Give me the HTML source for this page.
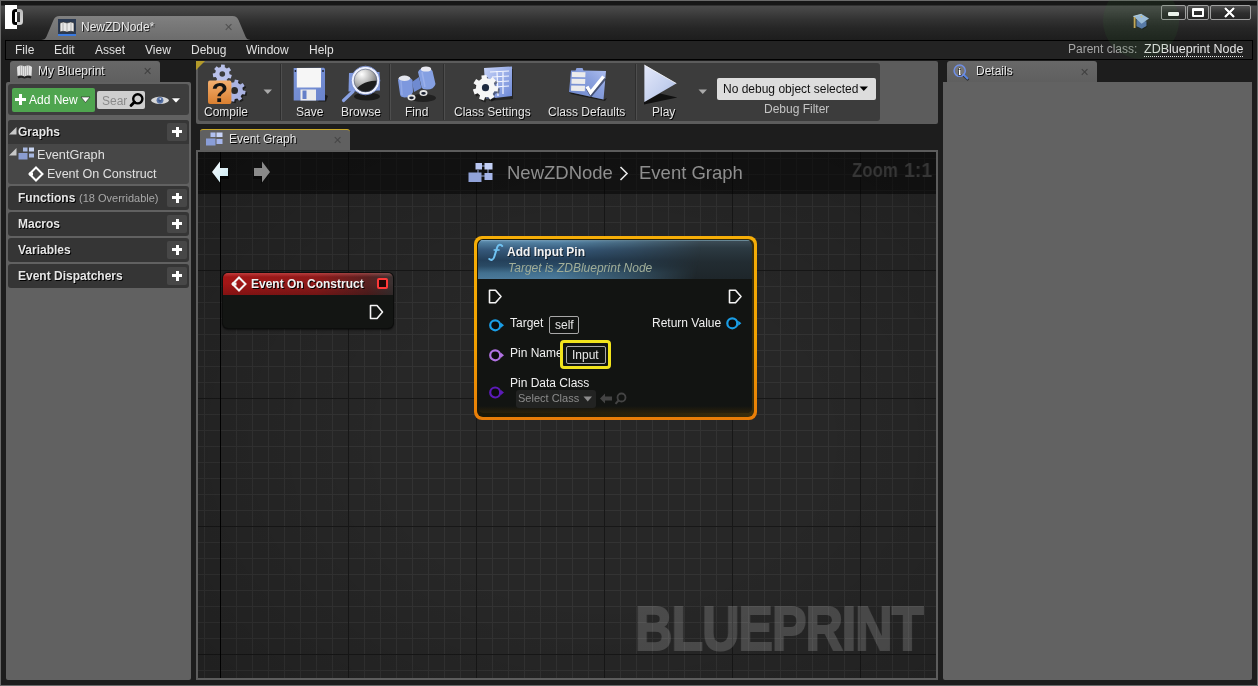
<!DOCTYPE html>
<html><head><meta charset="utf-8">
<style>
*{margin:0;padding:0;box-sizing:border-box}
html,body{width:1258px;height:686px;overflow:hidden;background:#1c1c1c}
body{font-family:"Liberation Sans",sans-serif;font-size:12px;color:#e6e6e6;position:relative}
.a{position:absolute}
.t{position:absolute;white-space:nowrap;line-height:1;will-change:transform}
.sh{text-shadow:1px 1px 0 #000}
#win{left:0;top:0;width:1258px;height:686px;border:1px solid #6a6a6a;background:#1d1d1d}
#title{left:1px;top:1px;width:1256px;height:39px;background:linear-gradient(#171717 0,#171717 4px,#4b4b4b 5px,#424242 10px,#333 18px,#262626 27px,#1d1d1d 39px)}
.wbtn{border:1px solid #a0a0a0;border-radius:2px;background:linear-gradient(#505050,#2e2e2e 55%,#262626)}
#menubar{left:5px;top:40px;width:1248px;height:20px;background:#232323;border:1px solid #000}
.menu{top:44px;color:#e0e0e0}
/* left panel */
#lp{left:6px;top:82px;width:185px;height:598px;background:#616161;border-radius:2px}
.tab{background:linear-gradient(#686868,#5f5f5f);border-radius:3px 3px 0 0}
.sec{left:8px;width:181px;background:#353535;border-radius:3px}
.plus{width:20px;height:18px;background:#474747;border-radius:2px}
.plus:before,.plus:after{content:"";position:absolute;background:#fff}
.plus:before{left:5px;top:7px;width:10px;height:3px}
.plus:after{left:8.5px;top:3.5px;width:3px;height:10px}
/* toolbar */
#tb{left:196px;top:61px;width:742px;height:63px;background:#5c5c5c;border-radius:2px}
#tbin{left:198px;top:63px;width:682px;height:58px;background:#3c3c3c;border-radius:3px}
.sep{top:64px;width:2px;height:56px;background:#2e2e2e;border-right:1px solid #4e4e4e}
.lbl{top:106px}
/* graph */
#gframe{left:196px;top:150px;width:742px;height:530px;background:#5c5c5c}
#graph{left:198px;top:152px;width:738px;height:526px;overflow:hidden;background-color:#272727;
background-image:
linear-gradient(90deg,#000 1px,transparent 1px),
linear-gradient(90deg,#171717 1px,transparent 1px),
linear-gradient(#171717 1px,transparent 1px),
linear-gradient(90deg,#333 1px,transparent 1px),
linear-gradient(#333 1px,transparent 1px);
background-repeat:repeat-y,repeat,repeat,repeat,repeat;
background-size:1px 100%,128px 128px,128px 128px,16px 16px,16px 16px;
background-position:22px 0,22px 118px,22px 118px,6px 6px,6px 6px}
#vig{left:0;top:0;width:738px;height:526px;background:radial-gradient(ellipse 72% 75% at 55% 55%,rgba(0,0,0,0) 40%,rgba(0,0,0,.2) 100%)}
#crumb{left:0;top:0;width:738px;height:42px;background:rgba(0,0,0,.5)}
/* details */
#dp{left:943px;top:82px;width:309px;height:598px;background:#626262;border-radius:0 0 2px 2px}
</style></head><body>
<div id="win" class="a"></div>
<div id="title" class="a"></div>

<!-- logo -->
<div class="a" style="left:5px;top:5px;width:12px;height:24px;background:#fff"></div>
<div class="a" style="left:12px;top:9px;width:10.5px;height:16px;border:3px solid #fff;border-radius:3.5px;mix-blend-mode:difference"></div>
<!-- doc tab -->
<svg class="a" style="left:40px;top:15px" width="212" height="25" viewBox="0 0 212 25"><defs><linearGradient id="dt" x1="0" y1="0" x2="0" y2="1"><stop offset="0" stop-color="#808080"/><stop offset="1" stop-color="#6c6c6c"/></linearGradient></defs>
<path d="M0 25 C4 25 5.5 24 6.5 21.5 L13.5 5 C14.7 2.2 16.5 1 19.5 1 L192.5 1 C195.5 1 197.3 2.2 198.5 5 L205.5 21.5 C206.5 24 208 25 212 25 Z" fill="url(#dt)"/></svg>
<div class="a" style="left:58px;top:19px;width:18px;height:17px;background:#2b3a52;border-bottom:2px solid #3b7ae0"></div>
<svg class="a" style="left:59px;top:20px" width="16" height="14" viewBox="0 0 16 14"><path d="M1 3 Q4 1 8 3 Q12 1 15 3 L15 12 Q12 10.5 8 12 Q4 10.5 1 12 Z" fill="#e8e8e8" stroke="#222" stroke-width=".6"/><path d="M8 3 V12 M4 3 V11 M12 3 V11" stroke="#999" stroke-width=".7"/></svg>
<div class="t" style="left:81px;top:21px;color:#e8e8e8;text-shadow:1px 1px 0 #222">NewZDNode*</div>
<div class="t" style="left:224px;top:22px;color:#505050;font-size:11px">&#x2715;</div>
<!-- grad cap -->
<svg class="a" style="left:1132px;top:13px" width="18" height="17" viewBox="0 0 18 17"><path d="M4.5 7 L14.5 8.5 L14.5 13 L9.8 15.8 L4.5 13.2 Z" fill="#000" opacity=".4" transform="translate(.8,.8)"/><path d="M4.5 7 L14.5 8.5 L14.5 13 L9.8 15.8 L4.5 13.2 Z" fill="#5c7ab4"/><path d="M1.2 3.2 L9.5 1 L17 5.5 L9.6 10.75 Z" fill="#a6c2ea"/><path d="M1.2 3.4 L9.5 1.2" stroke="#d6e6fa" stroke-width=".7"/><circle cx="9.5" cy="3.6" r=".9" fill="#e8c878"/><path d="M2.6 4 L2.6 15" stroke="#d4ac5c" stroke-width="1.8"/></svg>
<!-- window buttons -->
<div class="a wbtn" style="left:1161px;top:5px;width:25px;height:15px"></div>
<div class="a wbtn" style="left:1187px;top:5px;width:22px;height:15px"></div>
<div class="a wbtn" style="left:1210px;top:5px;width:41px;height:15px"></div>
<div class="a" style="left:1168px;top:12px;width:11px;height:4px;background:#fff;border-radius:1px;box-shadow:0 0 1px #000"></div>
<div class="a" style="left:1192px;top:8px;width:12px;height:9px;border:2px solid #fff;border-top-width:3px;border-radius:1px"></div>
<svg class="a" style="left:1223px;top:7px" width="13" height="11" viewBox="0 0 13 11"><path d="M2 1 L11 10 M11 1 L2 10" stroke="#000" stroke-width="3.6" opacity=".5"/><path d="M2 1 L11 10 M11 1 L2 10" stroke="#fff" stroke-width="2.4"/></svg>
<div id="menubar" class="a"></div>
<div class="t menu" style="left:15px">File</div>
<div class="t menu" style="left:54px">Edit</div>
<div class="t menu" style="left:95px">Asset</div>
<div class="t menu" style="left:145px">View</div>
<div class="t menu" style="left:191px">Debug</div>
<div class="t menu" style="left:246px">Window</div>
<div class="t menu" style="left:309px">Help</div>

<div class="t" style="left:1068px;top:43px;color:#a6a6a6">Parent class:</div>
<div class="t" style="left:1144px;top:43px;color:#e6e6e6;font-size:12.5px;border-bottom:1px dotted #e6e6e6;padding-bottom:0px">ZDBlueprint Node</div>
<div class="a" style="left:1103px;top:-17px;width:76px;height:76px;border-radius:50%;background:radial-gradient(circle,rgba(50,130,50,.10) 0,rgba(50,130,50,.10) 70%,rgba(60,150,60,.18) 97%,transparent 100%)"></div>
<!-- left panel -->
<div class="a tab" style="left:10px;top:61px;width:150px;height:21px"></div>
<div class="t sh" style="left:38px;top:65px">My Blueprint</div>
<div id="lp" class="a"></div>
<div class="a" style="left:8px;top:84px;width:181px;height:31px;background:#3d3d3d;border-radius:3px"></div>
<svg class="a" style="left:16px;top:64px" width="17" height="15" viewBox="0 0 17 15"><path d="M2 13.5 Q5 12 8.5 13.5 Q12 12 15 13.5" stroke="#111" stroke-width="2" fill="none" opacity=".8"/><path d="M1 3 Q4.5 0.5 8.5 2.5 Q12.5 0.5 16 3 L15.5 12 Q12 10.5 8.5 12.5 Q5 10.5 1.5 12 Z" fill="#e2e2e2"/><path d="M8.5 2.5 V12.5 M4.5 2 V11 M12.5 2 V11 M6.5 2 V11.5 M10.5 2 V11.5" stroke="#9a9a9a" stroke-width=".6"/></svg>
<div class="t" style="left:143px;top:66px;color:#404040;font-size:10.5px">&#x2715;</div>
<div class="a" style="left:12px;top:88px;width:83px;height:24px;background:#4fa54f;border-radius:2px"></div>
<div class="a" style="left:15px;top:97.5px;width:11px;height:3px;background:#fff"></div>
<div class="a" style="left:19px;top:93.5px;width:3px;height:11px;background:#fff"></div>
<div class="t" style="left:29px;top:94px;color:#fff">Add New</div>
<svg class="a" style="left:80px;top:96px" width="11" height="8" viewBox="0 0 11 8"><path d="M1 1 L10 1 L5.5 6.5 Z" fill="#fff" stroke="#222" stroke-width=".6"/></svg>
<div class="a" style="left:97px;top:91px;width:48px;height:18px;background:#cecece;border-radius:2px"></div>
<div class="t" style="left:102px;top:94.5px;color:#8a8a8a;width:25px;overflow:hidden">Sear</div>
<svg class="a" style="left:128px;top:91px" width="18" height="18" viewBox="0 0 18 18"><circle cx="9.8" cy="7.8" r="4.6" stroke="#000" stroke-width="2.4" fill="none"/><path d="M6.5 11 L3 14.6" stroke="#000" stroke-width="2.8" stroke-linecap="round"/></svg>
<svg class="a" style="left:150px;top:94px" width="20" height="13" viewBox="0 0 20 13"><path d="M1 6.3 C3 1.5 17 1.5 19 6.3 C17 11.3 3 11.3 1 6.3 Z" fill="#d8d8d8"/><circle cx="10" cy="6.3" r="3.4" fill="#5873a6"/><circle cx="10" cy="6.3" r="1.6" fill="#3f5788"/><circle cx="10.3" cy="5" r=".9" fill="#c8d4e8"/></svg>
<svg class="a" style="left:171px;top:97px" width="10" height="7" viewBox="0 0 10 7"><path d="M0.5 1 L9.5 1 L5 6 Z" fill="#fff" stroke="#222" stroke-width=".5"/></svg>

<div class="sec a" style="top:120px;height:64px;background:#474747"></div>
<div class="a" style="left:8px;top:120px;width:181px;height:24px;background:#363636;border-radius:3px 3px 0 0"></div>
<div class="sec a" style="top:186px;height:24px"></div>
<div class="sec a" style="top:212px;height:24px"></div>
<div class="sec a" style="top:238px;height:24px"></div>
<div class="sec a" style="top:264px;height:24px"></div>
<svg class="a" style="left:9px;top:127px" width="8" height="8"><path d="M0 7.5 L7.5 7.5 L7.5 0 Z" fill="#c8c8c8"/></svg>
<div class="t sh" style="left:18px;top:126px;font-weight:bold">Graphs</div>
<div class="a plus" style="left:167px;top:123px"></div>
<svg class="a" style="left:9px;top:148px" width="8" height="8"><path d="M0 7.5 L7.5 7.5 L7.5 0 Z" fill="#c8c8c8"/></svg>
<svg class="a" style="left:18px;top:147px" width="17" height="13" viewBox="0 0 17 13"><rect x="5" y="0.5" width="4.5" height="4" fill="#a8b8e0"/><rect x="11" y="0.5" width="5" height="4" fill="#c8d4f0"/><rect x="0.5" y="6" width="9" height="6.5" fill="#8a9cd0"/><rect x="11" y="6.5" width="5" height="4" fill="#a8b8e0"/></svg>
<div class="t" style="left:37px;top:148.5px;color:#e0e0e0;font-size:12.7px">EventGraph</div>
<svg class="a" style="left:28px;top:166px" width="16" height="16" viewBox="0 0 16 16"><path d="M8 1.5 L14.5 8 L8 14.5 L1.5 8 Z" fill="none" stroke="#fff" stroke-width="2"/><rect x="1" y="6.5" width="4" height="3" fill="#fff"/></svg>
<div class="t" style="left:47px;top:168.3px;color:#e0e0e0;font-size:12.55px">Event On Construct</div>
<div class="t sh" style="left:18px;top:192px;font-weight:bold">Functions</div>
<div class="t" style="left:79px;top:193px;color:#a8a8a8;font-size:11px">(18 Overridable)</div>
<div class="a plus" style="left:167px;top:189px"></div>
<div class="t sh" style="left:18px;top:218px;font-weight:bold">Macros</div>
<div class="a plus" style="left:167px;top:215px"></div>
<div class="t sh" style="left:18px;top:244px;font-weight:bold">Variables</div>
<div class="a plus" style="left:167px;top:241px"></div>
<div class="t sh" style="left:18px;top:270px;font-weight:bold">Event Dispatchers</div>
<div class="a plus" style="left:167px;top:267px"></div>

<!-- toolbar -->
<div id="tb" class="a"></div>
<div id="tbin" class="a"></div>
<svg class="a" style="left:196px;top:61px" width="10" height="10"><path d="M0 0 L9 0 L0 9 Z" fill="#b39a2a"/></svg>
<div class="a sep" style="left:280px"></div>
<div class="a sep" style="left:389px"></div>
<div class="a sep" style="left:443px"></div>
<div class="a sep" style="left:635px"></div>
<!-- compile -->
<svg class="a" style="left:204px;top:63px" width="46" height="42" viewBox="0 0 46 42">
<path d="M38.89 27.30 L41.69 27.99 L40.96 31.60 L38.12 31.14 L36.65 33.32 L38.14 35.79 L35.07 37.82 L33.38 35.49 L30.80 35.99 L30.11 38.79 L26.50 38.06 L26.96 35.22 L24.78 33.75 L22.31 35.24 L20.28 32.17 L22.61 30.48 L22.11 27.90 L19.31 27.21 L20.04 23.60 L22.88 24.06 L24.35 21.88 L22.86 19.41 L25.93 17.38 L27.62 19.71 L30.20 19.21 L30.89 16.41 L34.50 17.14 L34.04 19.98 L36.22 21.45 L38.69 19.96 L40.72 23.03 L38.39 24.72 Z" fill="#000" opacity=".5" transform="translate(1.5,1.5)"/>
<path d="M25.50 11.16 L27.84 12.07 L26.78 15.51 L24.33 14.94 L22.67 16.73 L23.41 19.12 L20.06 20.44 L18.98 18.17 L16.55 17.98 L15.14 20.06 L12.02 18.26 L13.12 16.00 L11.75 13.98 L9.24 14.18 L8.71 10.62 L11.16 10.07 L11.88 7.74 L10.17 5.90 L12.62 3.26 L14.58 4.84 L16.85 3.95 L17.22 1.46 L20.81 1.73 L20.79 4.25 L22.91 5.47 L25.08 4.21 L27.11 7.18 L25.14 8.74 Z" fill="#b9c1ea"/><circle cx="18.3" cy="11" r="2.8" fill="#3c3c3c"/>
<path d="M38.89 27.30 L41.69 27.99 L40.96 31.60 L38.12 31.14 L36.65 33.32 L38.14 35.79 L35.07 37.82 L33.38 35.49 L30.80 35.99 L30.11 38.79 L26.50 38.06 L26.96 35.22 L24.78 33.75 L22.31 35.24 L20.28 32.17 L22.61 30.48 L22.11 27.90 L19.31 27.21 L20.04 23.60 L22.88 24.06 L24.35 21.88 L22.86 19.41 L25.93 17.38 L27.62 19.71 L30.20 19.21 L30.89 16.41 L34.50 17.14 L34.04 19.98 L36.22 21.45 L38.69 19.96 L40.72 23.03 L38.39 24.72 Z" fill="#aab3e2"/><circle cx="30.5" cy="27.6" r="3.5" fill="#2a2a2a"/>
<defs><linearGradient id="og" x1="0" y1="0" x2="0" y2="1"><stop offset="0" stop-color="#f5b070"/><stop offset="1" stop-color="#d97f30"/></linearGradient></defs>
<rect x="4" y="17.4" width="23.4" height="23.6" rx="2" fill="url(#og)"/>
<text x="15.7" y="39" font-family="Liberation Sans" font-weight="bold" font-size="27" text-anchor="middle" fill="#151515">?</text>
</svg>
<div class="t sh" style="left:204px;top:105.5px">Compile</div>
<svg class="a" style="left:263px;top:89px" width="10" height="6"><path d="M0.5 0.5 L9 0.5 L4.75 5 Z" fill="#aaa"/></svg>
<!-- save -->
<svg class="a" style="left:288px;top:62px" width="44" height="42" viewBox="0 0 44 42">
<path d="M36 32 L40 34 L38 39.5 L30 39.5 Z" fill="#000" opacity=".55"/>
<defs><linearGradient id="sv" x1="0" y1="0" x2="1" y2="1"><stop offset="0" stop-color="#7d96da"/><stop offset="1" stop-color="#6a84cc"/></linearGradient></defs>
<path d="M5.7 6 L36 5.8 L37 7 L37 38.5 L5.7 38.5 Z" fill="url(#sv)"/>
<rect x="8.8" y="6" width="24.2" height="19.5" fill="#f6f6f6"/>
<rect x="12.5" y="27.5" width="15.5" height="11" fill="#ececec"/>
<rect x="14.5" y="28.5" width="4" height="8.5" fill="#6580c8"/>
<circle cx="7.4" cy="9" r=".9" fill="#1a1e2a"/><circle cx="35" cy="9" r=".9" fill="#1a1e2a"/>
</svg>
<div class="t sh" style="left:296px;top:105.5px">Save</div>
<!-- browse -->
<svg class="a" style="left:338px;top:62px" width="48" height="42" viewBox="0 0 48 42">
<ellipse cx="29" cy="34.5" rx="13" ry="4" fill="#000" opacity=".55"/>
<path d="M11 11 L41.5 10 L42 28.5 L10.5 29.5 Z" fill="#7f98dd"/>
<path d="M5.5 38.5 L15 29.5" stroke="#8aa2e4" stroke-width="3.2" stroke-linecap="round"/>
<defs><radialGradient id="lg" cx=".35" cy=".25" r=".75"><stop offset="0" stop-color="#ffffff"/><stop offset=".5" stop-color="#b8b8b8"/><stop offset="1" stop-color="#606060"/></radialGradient></defs>
<circle cx="27.5" cy="18.5" r="12.5" fill="url(#lg)"/>
<clipPath id="lc"><circle cx="27.5" cy="18.5" r="12.5"/></clipPath>
<path d="M14 34 C18 24 28 17 42 19 L42 34 Z" fill="#1c1c1c" clip-path="url(#lc)"/>
<circle cx="27.5" cy="18.5" r="12.8" fill="none" stroke="#eef1ff" stroke-width="2.6"/>
<circle cx="27.5" cy="18.5" r="14.3" fill="none" stroke="#7d93d4" stroke-width=".9"/>
<circle cx="27.5" cy="18.5" r="11.4" fill="none" stroke="#55607a" stroke-width=".6"/>
</svg>
<div class="t sh" style="left:341px;top:105.5px">Browse</div>
<!-- find -->
<svg class="a" style="left:393px;top:62px" width="48" height="42" viewBox="0 0 48 42">
<ellipse cx="30" cy="36" rx="13" ry="4" fill="#000" opacity=".45"/>
<path d="M5 18 Q6 14 11 14.5 Q17 15 19.5 18 L20 30 Q18 35.5 11.5 35.5 Q7 35 7 32 Z" fill="#7d98de"/>
<path d="M8 19 L9 33" stroke="#9ab0ea" stroke-width="1.5" opacity=".7"/>
<ellipse cx="11.5" cy="16.3" rx="5.8" ry="2.7" fill="#e4e6ee"/>
<path d="M25 10 Q27 5.5 33 5.5 Q38 6 39.5 9 L42.5 22 Q41 27.5 34 27.5 Q29 27.5 28.5 25 Z" fill="#85a0e2"/>
<path d="M29 10 L32 25" stroke="#a4b8ee" stroke-width="1.5" opacity=".7"/>
<ellipse cx="33" cy="7" rx="5.2" ry="2.6" fill="#e8e8f0"/>
<path d="M19 20 L26 15 L28.5 26 L21 30 Z" fill="#6f8ad0"/>
<ellipse cx="18.5" cy="35.5" rx="4" ry="3" fill="#e6e6e6"/><ellipse cx="18.5" cy="35.8" rx="2.3" ry="1.4" fill="#1a2030"/>
<ellipse cx="30.5" cy="31" rx="4" ry="3" fill="#e6e6e6"/><ellipse cx="30.5" cy="31.3" rx="2.3" ry="1.4" fill="#1a2030"/>
</svg>
<div class="t sh" style="left:405px;top:105.5px">Find</div>
<!-- class settings -->
<svg class="a" style="left:468px;top:66px" width="48" height="38" viewBox="0 0 48 38">
<path d="M17 3 L44 1 L44 31 L20 33 Z" fill="#000" opacity=".4" transform="translate(1,2)"/>
<defs><linearGradient id="cs" x1="0" y1="0" x2="1" y2="1"><stop offset="0" stop-color="#c8d4f8"/><stop offset="1" stop-color="#6a86d6"/></linearGradient></defs>
<path d="M16 2 L44 0.5 L44 30 L18 33 Z" fill="url(#cs)"/>
<path d="M22 6 L41 5 M24 11 L41 10 M25 16 L41 15 M26 21 L41 20 M29 5 L30 30 M35 5 L35 28" stroke="#f4f6ff" stroke-width="1.2"/>
<path d="M26.95 20.00 L30.23 20.40 L29.72 25.51 L26.42 25.25 L24.72 28.03 L26.46 30.84 L22.14 33.63 L20.29 30.89 L17.06 31.29 L15.94 34.40 L11.07 32.77 L12.06 29.61 L9.73 27.33 L6.59 28.40 L4.84 23.57 L7.92 22.38 L8.25 19.13 L5.46 17.35 L8.14 12.97 L11.00 14.63 L13.74 12.87 L13.40 9.58 L18.49 8.94 L18.97 12.21 L22.06 13.25 L24.42 10.93 L28.10 14.52 L25.83 16.94 Z" fill="#000" opacity=".45" transform="translate(1.5,2)"/>
<path d="M26.95 20.00 L30.23 20.40 L29.72 25.51 L26.42 25.25 L24.72 28.03 L26.46 30.84 L22.14 33.63 L20.29 30.89 L17.06 31.29 L15.94 34.40 L11.07 32.77 L12.06 29.61 L9.73 27.33 L6.59 28.40 L4.84 23.57 L7.92 22.38 L8.25 19.13 L5.46 17.35 L8.14 12.97 L11.00 14.63 L13.74 12.87 L13.40 9.58 L18.49 8.94 L18.97 12.21 L22.06 13.25 L24.42 10.93 L28.10 14.52 L25.83 16.94 Z" fill="#f6f6f6"/><circle cx="17.5" cy="21.7" r="3.6" fill="#1e2a40"/>
</svg>
<div class="t sh" style="left:454px;top:105.5px">Class Settings</div>
<!-- class defaults -->
<svg class="a" style="left:562px;top:62px" width="50" height="42" viewBox="0 0 50 42">
<path d="M7 30 L41.5 37.5 L45 36 L43 39 L9 32 Z" fill="#000" opacity=".55"/>
<defs><linearGradient id="cd" x1="0" y1="1" x2="1" y2="0"><stop offset="0" stop-color="#6a84c8"/><stop offset=".6" stop-color="#8aa0de"/><stop offset="1" stop-color="#b0c0f0"/></linearGradient></defs>
<path d="M13.5 8.6 L14.5 6 L20.5 6 L21.5 8.6 L44 9 L41.5 37.5 L7 30 L9 8.6 Z" fill="url(#cd)"/>
<path d="M10 10 L23.5 10.2 L23.3 15.3 L9.8 15 Z M9.6 16.8 L23.3 17 L23.1 22 L9.4 21.8 Z M9.2 23.6 L23 23.8 L22.8 29.2 L9 28.8 Z" fill="#ececec"/>
<path d="M25 25.5 L28.6 31.5 L42 15.5" stroke="#1a1f30" stroke-width="3.8" fill="none" opacity=".6" transform="translate(.6,.8)"/>
<path d="M25 24.5 L28.6 30.5 L41.5 14.5" stroke="#fff" stroke-width="3.4" fill="none"/>
</svg>
<div class="t sh" style="left:548px;top:105.5px">Class Defaults</div>
<!-- play -->
<svg class="a" style="left:642px;top:63px" width="40" height="42" viewBox="0 0 40 42">
<path d="M2 39 L18 30.5 L35.4 34.5 L2 41.5 Z" fill="#111"/>
<defs><linearGradient id="pg" x1="0" y1="0" x2="1" y2="1"><stop offset="0" stop-color="#e4e8fa"/><stop offset=".6" stop-color="#c4d0ee"/><stop offset="1" stop-color="#a8b8e0"/></linearGradient></defs>
<path d="M2.4 2.1 L34.3 20.5 L2.4 38.9 Z" fill="url(#pg)"/><path d="M2.4 2.1 L34.3 20.5" stroke="#fff" stroke-width=".8"/>
</svg>
<div class="t sh" style="left:652px;top:105.5px">Play</div>
<svg class="a" style="left:698px;top:89px" width="10" height="6"><path d="M0.5 0.5 L9 0.5 L4.75 5 Z" fill="#aaa"/></svg>
<div class="a" style="left:717px;top:78px;width:159px;height:22px;background:#dddddd;border-radius:2px"></div>
<div class="t" style="left:723px;top:82.5px;color:#111">No debug object selected</div>
<svg class="a" style="left:859px;top:86px" width="10" height="6"><path d="M0.5 0.5 L9 0.5 L4.75 5 Z" fill="#000"/></svg>
<div class="t" style="left:764px;top:102.5px;color:#c4c4c4">Debug Filter</div>

<!-- graph tab -->
<div class="a" style="left:200px;top:129px;width:150px;height:23px;background:#606060;border-radius:3px 3px 0 0;border-top:1px solid #c9a826"></div>
<svg class="a" style="left:206px;top:132px" width="17" height="14" viewBox="0 0 17 14"><rect x="4.5" y="0.5" width="5" height="4.5" fill="#b0c0f0"/><rect x="10.5" y="0.5" width="6" height="4.5" fill="#c8d4f8"/><rect x="0" y="6.5" width="9.5" height="7" fill="#8a9ed8"/><rect x="10.5" y="7" width="6" height="5" fill="#a6b6ec"/></svg>
<div class="t sh" style="left:229px;top:133px">Event Graph</div>
<div class="t" style="left:333px;top:135px;color:#464646;font-size:10.5px">&#x2715;</div>
<div id="gframe" class="a"></div>
<div id="graph" class="a">
  <div id="vig" class="a"></div>
  <div id="crumb" class="a"></div>
  <svg class="a" style="left:13px;top:8px" width="20" height="25" viewBox="0 0 20 25"><path d="M2 12 L10 3 L10 8 L18 8 L18 16 L10 16 L10 21 Z" fill="#000" opacity=".6" transform="translate(0,3)"/><defs><linearGradient id="ar" x1="0" y1="0" x2="1" y2="1"><stop offset="0" stop-color="#f8fbff"/><stop offset="1" stop-color="#c8e8f0"/></linearGradient></defs><path d="M1 12 L9 1.5 L9 8 L17 8 L17 16 L9 16 L9 22.5 Z" fill="url(#ar)"/></svg>
  <svg class="a" style="left:53px;top:8px" width="20" height="25" viewBox="0 0 20 25"><path d="M18 12 L10 3 L10 8 L2 8 L2 16 L10 16 L10 21 Z" fill="#000" opacity=".5" transform="translate(0,3)"/><path d="M19 12 L11 1.5 L11 8 L3 8 L3 16 L11 16 L11 22.5 Z" fill="#8a8a8a"/></svg>
  <svg class="a" style="left:270px;top:10px" width="26" height="21" viewBox="0 0 26 21"><path d="M10 4 H17 M10 14 H17 M20 7 V14 M10 8 V12" stroke="#9aaad8" stroke-width="1"/><rect x="7.5" y="1" width="6.5" height="6.5" fill="#b8c6f2"/><rect x="16.5" y="1" width="8" height="6.5" fill="#c4d0f6"/><rect x="0.5" y="10.5" width="13" height="9.5" fill="#90a2d8"/><rect x="16.5" y="11" width="8" height="7" fill="#a6b6ea"/></svg>
  <div class="t" style="left:309px;top:11.5px;font-size:18.5px;color:#8e8e8e">NewZDNode</div>
  <svg class="a" style="left:421px;top:14px" width="10" height="15" viewBox="0 0 10 15"><path d="M1.5 1 L8 7.5 L1.5 14" stroke="#e8e8e8" stroke-width="1.6" fill="none"/></svg>
  <div class="t" style="left:440.5px;top:11.5px;font-size:18.5px;color:#8e8e8e">Event Graph</div>
  <div class="t" style="left:653.5px;top:7.6px;font-size:20px;color:#363636;font-weight:bold;transform:scaleX(.84);transform-origin:0 0">Zoom</div><div class="t" style="left:706px;top:7.6px;font-size:20px;color:#363636;font-weight:bold;transform:scaleX(.98);transform-origin:0 0">1:1</div>
  <div class="t" style="left:437px;top:445.3px;font-size:63.2px;font-weight:bold;color:#fff;-webkit-text-stroke:2px #fff;letter-spacing:-1.25px;opacity:.17;transform:scaleX(.82);transform-origin:0 0">BLUEPRINT</div>
</div>


<!-- event node -->
<div class="a" style="left:222px;top:272px;width:172px;height:57px;border-radius:6px;background:#0c0d0c;box-shadow:0 1px 2px rgba(0,0,0,.6)"></div>
<div class="a" style="left:223px;top:273px;width:170px;height:55px;border-radius:5px;background:#131513;overflow:hidden">
  <div class="a" style="left:0;top:0;width:170px;height:22px;background:linear-gradient(90deg,#a41616 0,#8e1a1a 55%,#5a2020 85%,#3a3232 100%)"></div>
  <div class="a" style="left:0;top:0;width:170px;height:22px;background:linear-gradient(rgba(255,130,130,.35) 0,rgba(255,255,255,0) 4px,rgba(0,0,0,0) 10px,rgba(0,0,0,.2) 22px)"></div>
</div>
<svg class="a" style="left:231px;top:276px" width="16" height="16" viewBox="0 0 16 16"><path d="M8 1.5 L14.5 8 L8 14.5 L1.5 8 Z" fill="none" stroke="#f4f4f4" stroke-width="2"/><rect x="1" y="6.5" width="4.5" height="3" fill="#f4f4f4"/></svg>
<div class="t sh" style="left:251px;top:278px;font-weight:bold;color:#f2f2f2">Event On Construct</div>
<div class="a" style="left:377px;top:278px;width:11px;height:11px;border:2px solid #ff3838;border-radius:2px;background:#1e0606"></div>
<svg class="a" style="left:369px;top:304px" width="15" height="16" viewBox="0 0 15 16"><path d="M1.5 1.5 L8 1.5 L13.5 8 L8 14.5 L1.5 14.5 Z" fill="none" stroke="#f4f4f4" stroke-width="1.6" stroke-linejoin="round"/></svg>

<!-- add input pin node -->
<div class="a" style="left:474px;top:236px;width:283px;height:184px;border-radius:8px;background:linear-gradient(#f6ae08 0,#f2a200 55%,#e87c08 100%)"></div>
<div class="a" style="left:477px;top:239px;width:277px;height:178px;border-radius:6px;background:linear-gradient(90deg,#1a1808,#2e240a 70%,#3a2e0c)"></div>
<div class="a" style="left:478px;top:240px;width:274px;height:173px;border-radius:5px;background:#121412;overflow:hidden">
  <div class="a" style="left:0;top:0;width:274px;height:39px;border-radius:5px 5px 0 0;background:linear-gradient(#3e4e58 0,#2c3a42 8px,#222c32 22px,#1e262a 39px)"></div>
  <div class="a" style="left:0;top:0;width:274px;height:39px;border-radius:5px 5px 0 0;background:linear-gradient(#6a98ba 0,#4f7d9e 3px,#35587a 10px,#24405a 20px,#2a4a64 26px,#42708f 33px,#4c7a9a 39px);-webkit-mask-image:linear-gradient(100deg,#000 0,#000 30%,rgba(0,0,0,.55) 55%,transparent 80%)"></div>
  <div class="a" style="left:0;top:0;width:274px;height:1px;background:linear-gradient(90deg,#7aa6c4,#5a7a8a 60%,#6a8a98)"></div>
  <div class="a" style="left:0;top:166px;width:274px;height:7px;background:linear-gradient(rgba(40,30,8,0),rgba(44,34,10,.9))"></div>
</div>
<svg class="a" style="left:488px;top:243px" width="16" height="19" viewBox="0 0 16 19"><path d="M14.2 3 C13 1 10.2 1.2 9.3 4 L6.2 14 C5.3 17 3 17.6 1.3 16" stroke="#70c2f2" stroke-width="2" fill="none" stroke-linecap="round"/><path d="M5.6 7 L11.6 7" stroke="#70c2f2" stroke-width="1.6"/></svg>
<div class="t" style="left:507px;top:245.5px;font-weight:bold;color:#f2f2f2;text-shadow:1px 1px 0 rgba(0,0,0,.6)">Add Input Pin</div>
<div class="t" style="left:508px;top:262px;font-style:italic;color:#a0ad98">Target is ZDBlueprint Node</div>
<svg class="a" style="left:488px;top:289px" width="15" height="15" viewBox="0 0 15 15"><path d="M1.5 1.2 L7.5 1.2 L13 7.5 L7.5 13.8 L1.5 13.8 Z" fill="none" stroke="#f4f4f4" stroke-width="1.6" stroke-linejoin="round"/></svg>
<svg class="a" style="left:728px;top:289px" width="15" height="15" viewBox="0 0 15 15"><path d="M1.5 1.2 L7.5 1.2 L13 7.5 L7.5 13.8 L1.5 13.8 Z" fill="none" stroke="#f4f4f4" stroke-width="1.6" stroke-linejoin="round"/></svg>
<svg class="a" style="left:488px;top:319px" width="18" height="13" viewBox="0 0 18 13"><circle cx="7.2" cy="6.3" r="5" fill="#0c0c0c" stroke="#1a9ee6" stroke-width="2.2"/><path d="M13 3.8 L16 6.3 L13 8.8 Z" fill="#1a9ee6"/></svg>
<div class="t" style="left:509.5px;top:316.5px;color:#f0f0f0">Target</div>
<div class="a" style="left:549px;top:316px;width:30px;height:18px;border:1.5px solid #a8a8a8;border-radius:2px"></div>
<div class="t" style="left:555px;top:318.5px;color:#e8e8e8">self</div>
<div class="t" style="left:652px;top:316.5px;color:#f0f0f0">Return Value</div>
<svg class="a" style="left:726px;top:317px" width="18" height="13" viewBox="0 0 18 13"><circle cx="6.3" cy="6.3" r="5" fill="#0c0c0c" stroke="#1a9ee6" stroke-width="2.2"/><path d="M12.2 3.8 L15.4 6.3 L12.2 8.8 Z" fill="#1a9ee6"/></svg>
<svg class="a" style="left:488px;top:349px" width="18" height="13" viewBox="0 0 18 13"><circle cx="7.2" cy="6.3" r="5" fill="#0c0c0c" stroke="#b172e2" stroke-width="2.2"/><path d="M13 3.8 L16 6.3 L13 8.8 Z" fill="#b172e2"/></svg>
<div class="t" style="left:509.5px;top:346.5px;color:#f0f0f0">Pin Name</div>
<div class="a" style="left:560px;top:340px;width:51px;height:29px;border:3px solid #f2e41c;border-radius:4px;background:#121412"></div>
<div class="a" style="left:565.5px;top:346px;width:40px;height:18px;border:1.5px solid #a8a8a8;border-radius:2px"></div>
<div class="t" style="left:572px;top:349px;color:#e8e8e8">Input</div>
<svg class="a" style="left:488px;top:386px" width="18" height="13" viewBox="0 0 18 13"><circle cx="7.2" cy="6.5" r="5" fill="#0c0c0c" stroke="#5c1bb8" stroke-width="2.2"/><path d="M13 4 L16 6.5 L13 9 Z" fill="#5c1bb8"/></svg>
<div class="t" style="left:509.5px;top:376.5px;color:#f0f0f0">Pin Data Class</div>
<div class="a" style="left:516px;top:390px;width:80px;height:18px;border-radius:3px;background:#222322"></div>
<div class="t" style="left:518px;top:393px;color:#8c8c8c;font-size:11px">Select Class</div>
<svg class="a" style="left:583px;top:396px" width="10" height="6"><path d="M0.5 0.5 L9 0.5 L4.75 5.5 Z" fill="#8c8c8c"/></svg>
<svg class="a" style="left:599px;top:392px" width="30" height="14" viewBox="0 0 30 14"><path d="M1 6.5 L6 1.5 L6 4.5 L13 4.5 L13 8.5 L6 8.5 L6 11.5 Z" fill="#444"/><circle cx="22.5" cy="5.5" r="4" fill="none" stroke="#444" stroke-width="1.8"/><path d="M19.5 8.5 L16.5 11.8" stroke="#444" stroke-width="2"/></svg>

<!-- details -->
<div class="a tab" style="left:947px;top:61px;width:150px;height:21px"></div>
<svg class="a" style="left:952px;top:63px" width="18" height="18" viewBox="0 0 18 18"><path d="M11 12 L16.5 17" stroke="#000" stroke-width="2.5" opacity=".5"/><path d="M11 11 L16 16" stroke="#5a86e0" stroke-width="2"/><circle cx="7.7" cy="7.7" r="5.6" fill="rgba(255,255,255,.12)" stroke="#6f8fe8" stroke-width="1.5"/><text x="7.7" y="11.6" font-family="Liberation Serif" font-weight="bold" font-size="10.5" text-anchor="middle" fill="#fff" stroke="#111" stroke-width=".9" paint-order="stroke">i</text></svg>
<div class="t sh" style="left:975.5px;top:65px">Details</div>
<div class="t" style="left:1079.5px;top:66.5px;color:#404040;font-size:10.5px">&#x2715;</div>
<div id="dp" class="a"></div>
</body></html>
